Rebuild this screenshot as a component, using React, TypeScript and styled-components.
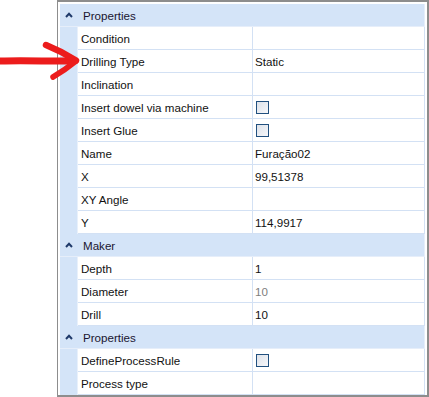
import React from 'react';
import styled, { createGlobalStyle } from 'styled-components';

type Prop = { label: string; value?: string; check?: boolean; muted?: boolean };
type Group = { title: string; rows: Prop[] };

const groups: Group[] = [
  {
    title: 'Properties',
    rows: [
      { label: 'Condition' },
      { label: 'Drilling Type', value: 'Static' },
      { label: 'Inclination' },
      { label: 'Insert dowel via machine', check: true },
      { label: 'Insert Glue', check: true },
      { label: 'Name', value: 'Furação02' },
      { label: 'X', value: '99,51378' },
      { label: 'XY Angle' },
      { label: 'Y', value: '114,9917' },
    ],
  },
  {
    title: 'Maker',
    rows: [
      { label: 'Depth', value: '1' },
      { label: 'Diameter', value: '10', muted: true },
      { label: 'Drill', value: '10' },
    ],
  },
  {
    title: 'Properties',
    rows: [
      { label: 'DefineProcessRule', check: true },
      { label: 'Process type' },
    ],
  },
];

function App() {
  return (
    <Page>
      <GlobalStyle />
      <Grid>
        {groups.map((g, i) => (
          <React.Fragment key={i}>
            <Header>
              <Caret>
                <svg width="8" height="6" viewBox="0 0 8 6">
                  <path d="M1 5 L4 1.8 L7 5" fill="none" stroke="#1f3a6a" strokeWidth="2" />
                </svg>
              </Caret>
              <HeaderTitle>{g.title}</HeaderTitle>
            </Header>
            {g.rows.map((r) => (
              <Row key={r.label}>
                <Gutter />
                <Label>{r.label}</Label>
                <Value $muted={r.muted}>
                  {r.check ? <Check /> : r.value}
                </Value>
              </Row>
            ))}
          </React.Fragment>
        ))}
      </Grid>
      {/* hand-drawn pointer over the grid */}
      <Arrow width="90" height="90" viewBox="0 0 90 90">
        <g fill="none" stroke="#ec1c1c" strokeLinecap="round" strokeLinejoin="round">
          <path d="M1 61 C 25 60, 50 61.5, 73 61" strokeWidth="7" />
          <path d="M46 45 Q 61 51 76 60.5" strokeWidth="6.5" />
          <path d="M76 61 Q 65 70 53 77" strokeWidth="5.5" />
        </g>
      </Arrow>
    </Page>
  );
}

export default App;

const GlobalStyle = createGlobalStyle`
  body {
    margin: 0;
    background: #ffffff;
    font-family: "Liberation Sans", Arial, sans-serif;
  }
`;

const Page = styled.div`
  position: relative;
  width: 429px;
  height: 397px;
  overflow: hidden;
  padding-left: 57px;
  box-sizing: border-box;
`;

const Grid = styled.div`
  width: 372px;
  box-sizing: border-box;
  border: 2px solid #8d8d8d;
  border-left-width: 1px;
  border-bottom-width: 2px;
  padding: 2px 2px 0 2px;
  background: #ffffff;
`;

const Header = styled.div`
  display: flex;
  align-items: center;
  height: 23px;
  box-sizing: border-box;
  background: #d4e4f8;
  border-bottom: 1px solid #e6eefa;
  border-right: 1px solid #e6eefa;
`;

const Caret = styled.div`
  width: 18px;
  display: flex;
  justify-content: center;
  align-items: center;
  padding-bottom: 1px;
`;

const HeaderTitle = styled.div`
  padding-left: 5px;
  font-size: 11.6px;
  color: #1a1530;
`;

const Row = styled.div`
  display: grid;
  grid-template-columns: 18px 175px 1fr;
  height: 23px;
`;

const Gutter = styled.div`
  background: #d4e4f8;
  border-right: 1px solid #e8f0fb;
  box-sizing: border-box;
`;

const Label = styled.div`
  display: flex;
  align-items: center;
  padding-left: 3px;
  font-size: 11.6px;
  color: #111111;
  border-right: 1px solid #d3e1f4;
  border-bottom: 1px solid #d3e1f4;
  white-space: nowrap;
`;

const Value = styled.div<{ $muted?: boolean }>`
  display: flex;
  align-items: center;
  padding-left: 2px;
  font-size: 11.6px;
  color: ${(p) => (p.$muted ? '#7e7e7e' : '#111111')};
  border-bottom: 1px solid #d3e1f4;
  border-right: 1px solid #d3e1f4;
`;

const Check = styled.div`
  width: 13px;
  height: 13px;
  box-sizing: border-box;
  margin-left: 1px;
  border: 1px solid #21507f;
  background: linear-gradient(135deg, #dde2ea, #f6f7fa);
`;

const Arrow = styled.svg`
  position: absolute;
  left: 0;
  top: 0;
`;
